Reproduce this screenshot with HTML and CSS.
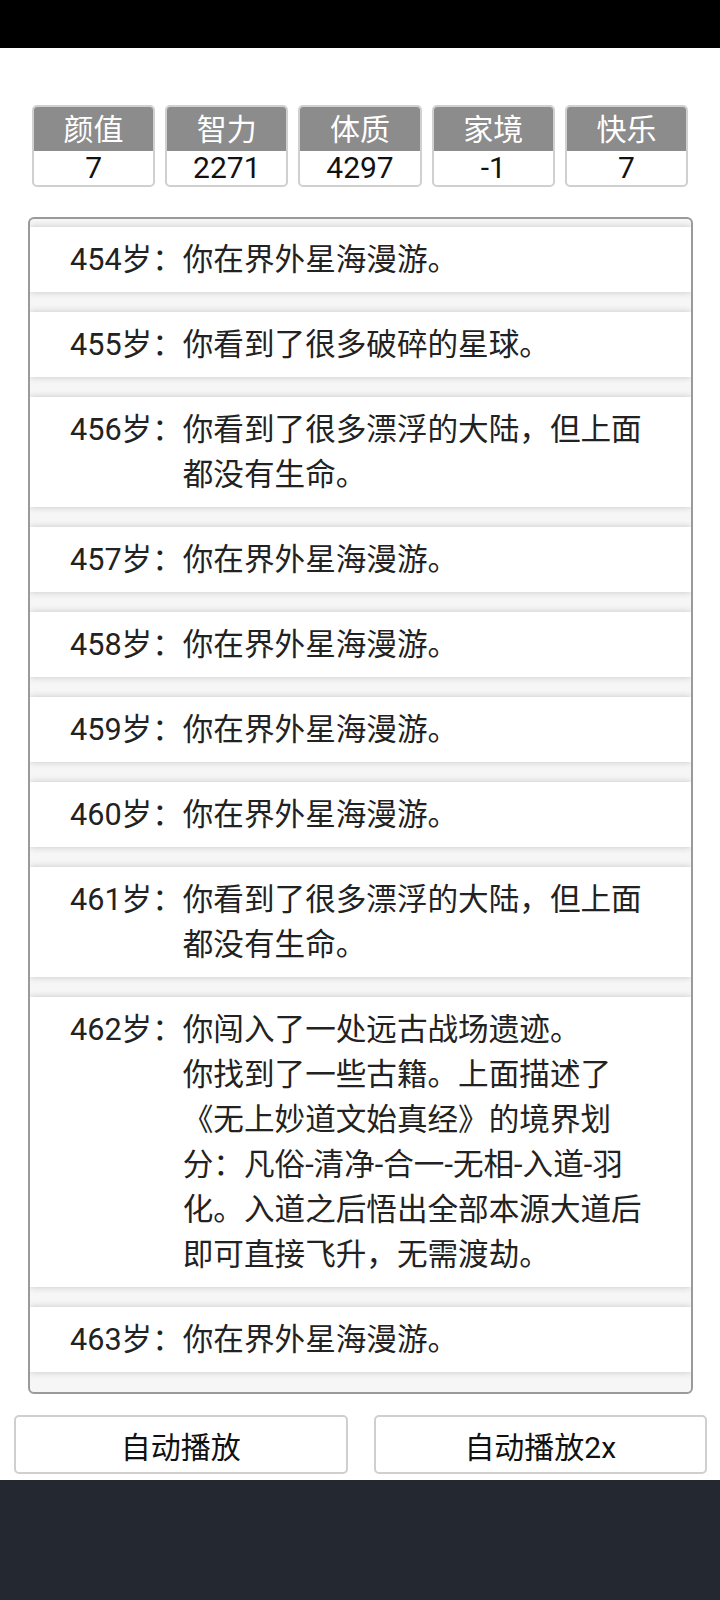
FILE: index.html
```html
<!DOCTYPE html>
<html lang="zh-CN">
<head>
  <meta charset="UTF-8" />
  <meta name="viewport" content="width=device-width, initial-scale=1.0" />
  <title>人生重开模拟器</title>
  <link rel="stylesheet" href="styles.css">
</head>
<body>
  <div class="status-bar"></div>

  <div class="stats">
    <div class="stat"><div class="stat-name">颜值</div><div class="stat-value">7</div></div>
    <div class="stat"><div class="stat-name">智力</div><div class="stat-value">2271</div></div>
    <div class="stat"><div class="stat-name">体质</div><div class="stat-value">4297</div></div>
    <div class="stat"><div class="stat-name">家境</div><div class="stat-value">-1</div></div>
    <div class="stat"><div class="stat-name">快乐</div><div class="stat-value">7</div></div>
  </div>

  <ul class="lifetrajectory">
    <li><span class="age">454岁：</span><span class="event">你在界外星海漫游。</span></li>
    <li><span class="age">455岁：</span><span class="event">你看到了很多破碎的星球。</span></li>
    <li><span class="age">456岁：</span><span class="event">你看到了很多漂浮的大陆，但上面都没有生命。</span></li>
    <li><span class="age">457岁：</span><span class="event">你在界外星海漫游。</span></li>
    <li><span class="age">458岁：</span><span class="event">你在界外星海漫游。</span></li>
    <li><span class="age">459岁：</span><span class="event">你在界外星海漫游。</span></li>
    <li><span class="age">460岁：</span><span class="event">你在界外星海漫游。</span></li>
    <li><span class="age">461岁：</span><span class="event">你看到了很多漂浮的大陆，但上面都没有生命。</span></li>
    <li><span class="age">462岁：</span><span class="event">你闯入了一处远古战场遗迹。<br>你找到了一些古籍。上面描述了《无上妙道文始真经》的境界划分：凡俗-清净-合一-无相-入道-羽化。入道之后悟出全部本源大道后即可直接飞升，无需渡劫。</span></li>
    <li><span class="age">463岁：</span><span class="event">你在界外星海漫游。</span></li>
  </ul>

  <div class="actions">
    <button id="auto">自动播放</button>
    <button id="auto2x">自动播放2x</button>
  </div>

  <div class="nav-bar"></div>
</body>
</html>
```
FILE: styles.css
```css
body {
  margin: 0;
  padding: 0;
  font-family: Roboto, "Noto Sans CJK SC", sans-serif;
  font-size: 30px;
  color: #222;
  background: #fff;
}

.status-bar {
  height: 48px;
  background: #000;
}

.stats {
  display: flex;
  gap: 10px;
  padding: 57px 32px 0 32px;
}

.stat {
  flex: 1;
  border: 2px solid #d0d0d0;
  border-radius: 5px;
  overflow: hidden;
  text-align: center;
}

.stat-name {
  height: 44px;
  line-height: 46px;
  background: #8c8c8c;
  color: #fff;
}

.stat-value {
  height: 34px;
  line-height: 34px;
  color: #111;
}

.lifetrajectory {
  list-style: none;
  margin: 30px 27px 0 28px;
  padding: 8px 0 0 0;
  border: 2px solid #9a9a9a;
  border-radius: 6px;
  background: #f6f6f6;
  overflow: hidden;
}

.lifetrajectory li {
  display: flex;
  background: #fff;
  padding: 10px 38px 10px 40px;
  font-size: 30.6px;
  line-height: 45px;
  margin-bottom: 20px;
  box-shadow: 0 0 7px rgba(0, 0, 0, 0.2);
}

.age {
  flex: none;
}

.event {
  flex: 1;
}

.actions {
  display: flex;
  gap: 26px;
  padding: 0 13px 0 14px;
  margin-top: 21px;
}

button {
  flex: 1;
  height: 59px;
  background: #fff;
  border: 2px solid #cfcfcf;
  border-radius: 5px;
  font-family: Roboto, "Noto Sans CJK SC", sans-serif;
  font-size: 30px;
  color: #111;
  padding: 0;
}

.nav-bar {
  margin-top: 6px;
  height: 120px;
  background: #232831;
}
```
